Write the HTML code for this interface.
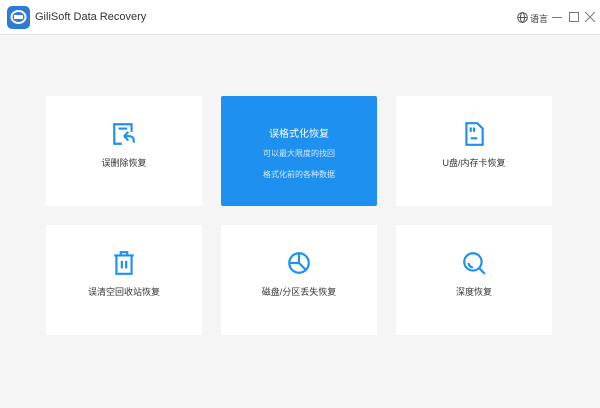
<!DOCTYPE html>
<html><head><meta charset="utf-8"><style>
*{margin:0;padding:0;box-sizing:border-box}
body{width:600px;height:408px;background:#f5f5f5;font-family:"Liberation Sans","Noto Sans CJK SC",sans-serif;position:relative;overflow:hidden}
.hdr{position:absolute;left:0;top:0;width:600px;height:35px;background:#fff;border-bottom:1px solid #e6e6e6}
.logo{position:absolute;left:7px;top:6px;width:23px;height:23px;border-radius:5px;background:#2e7bd6}
.title{position:absolute;left:35px;top:11px;font-size:11px;color:#333}
.card{position:absolute;width:156px;height:110px;background:#fff;text-align:center;color:#333;font-size:9px}
.card svg{position:absolute;left:65px;top:25px}
.card .l{position:absolute;left:0;right:0;top:60px}
.blue{background:#1e90f0;color:#fff;border-radius:2px}
</style></head><body>
<div class="hdr">
<div class="logo"><svg width="23" height="23"><ellipse cx="11.5" cy="11" rx="7" ry="6" fill="none" stroke="#fff" stroke-width="2"/><rect x="7" y="9" width="9" height="4" fill="#fff"/></svg></div>
<div class="title">GiliSoft Data Recovery</div>
<svg style="position:absolute;left:517px;top:12px" width="11" height="11" viewBox="0 0 11 11" fill="none" stroke="#444" stroke-width="0.9"><circle cx="5.5" cy="5.5" r="4.8"/><ellipse cx="5.5" cy="5.5" rx="2" ry="4.8"/><path d="M0.7 5.5h9.6"/></svg>
<div style="position:absolute;left:530px;top:12px;font-size:9px;color:#333">语言</div>
<div style="position:absolute;left:552px;top:17px;width:10px;height:1px;background:#777"></div>
<div style="position:absolute;left:569px;top:12px;width:10px;height:10px;border:1px solid #777"></div>
<svg style="position:absolute;left:585px;top:12px" width="10" height="10" stroke="#777" stroke-width="1"><path d="M0 0L10 10M10 0L0 10"/></svg>
</div>

<div class="card" style="left:46px;top:96px"><svg width="26" height="26" viewBox="0 0 24 24" fill="none" stroke="#1e90f0" stroke-width="2"><path d="M10 21H3V3h16v7"/><path d="M7 7h8"/><path d="M12 14l4-4M12 14l4 4M12 14h5a4 4 0 0 1 4 4v2"/></svg><div class="l">误删除恢复</div></div>
<div class="card blue" style="left:221px;top:96px"><div style="position:absolute;left:0;right:0;top:29px;font-size:10px">误格式化恢复</div><div style="position:absolute;left:0;right:0;top:52px;font-size:8px;color:#d8ebfd">可以最大限度的找回</div><div style="position:absolute;left:0;right:0;top:73px;font-size:8px;color:#d8ebfd">格式化前的各种数据</div></div>
<div class="card" style="left:396px;top:96px"><svg width="26" height="26" viewBox="0 0 24 24" fill="none" stroke="#1e90f0" stroke-width="2"><path d="M5 2h10l5 5v15H5z"/><path d="M9 6v4M12 6v4M9 16h6"/></svg><div class="l">U盘/内存卡恢复</div></div>
<div class="card" style="left:46px;top:225px"><svg width="26" height="26" viewBox="0 0 24 24" fill="none" stroke="#1e90f0" stroke-width="2"><path d="M3 5h18M9 5V2h6v3M5 5v17h14V5M10 10v7M14 10v7"/></svg><div class="l">误清空回收站恢复</div></div>
<div class="card" style="left:221px;top:225px"><svg width="26" height="26" viewBox="0 0 24 24" fill="none" stroke="#1e90f0" stroke-width="2"><circle cx="12" cy="12" r="9"/><path d="M12 3v9H3M12 12l6 6"/></svg><div class="l">磁盘/分区丢失恢复</div></div>
<div class="card" style="left:396px;top:225px"><svg width="26" height="26" viewBox="0 0 24 24" fill="none" stroke="#1e90f0" stroke-width="2"><circle cx="11" cy="11" r="8"/><path d="M17 17l5 5M7 12a4 4 0 0 0 4 4"/></svg><div class="l">深度恢复</div></div>
</body></html>
